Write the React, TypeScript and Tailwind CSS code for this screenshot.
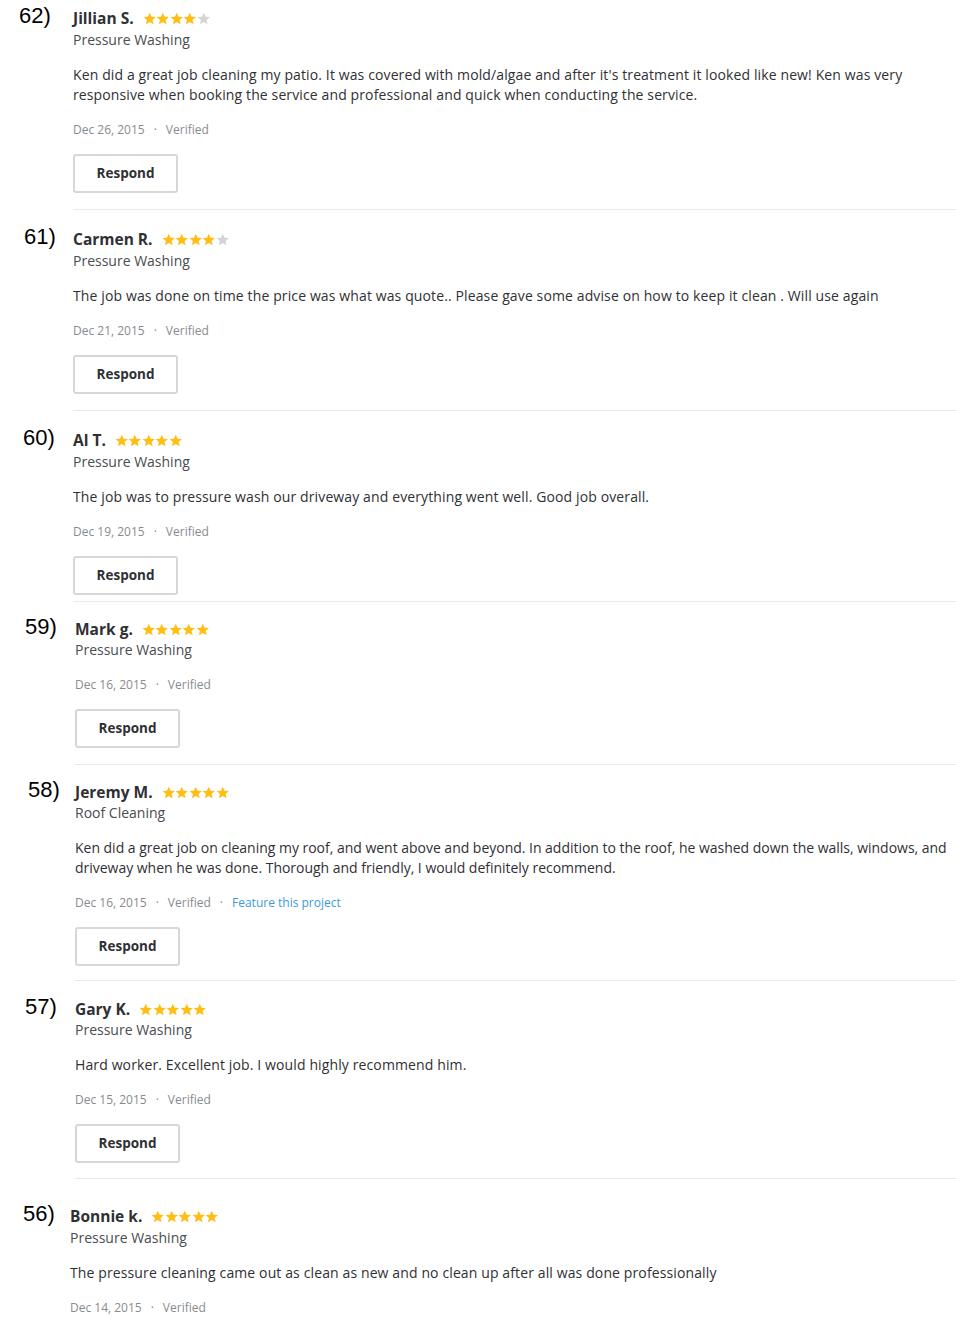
import React from "react"

type Review = {
    num: string
    numX: number
    x: number
    name: string
    stars: number
    category: string
    body?: string[]
    date: string
    feature?: boolean
    pt: number
    pb: number
    tight?: boolean
    narrow?: boolean
    respond: boolean
}

const reviews: Review[] = [
    {
        num: "62)",
        numX: 19,
        x: 73,
        name: "Jillian S.",
        stars: 4,
        category: "Pressure Washing",
        body: [
            "Ken did a great job cleaning my patio. It was covered with mold/algae and after it's treatment it looked like new! Ken was very",
            "responsive when booking the service and professional and quick when conducting the service.",
        ],
        date: "Dec 26, 2015",
        pt: 7,
        pb: 16,
        respond: true,
    },
    {
        num: "61)",
        numX: 24,
        x: 73,
        name: "Carmen R.",
        stars: 4,
        category: "Pressure Washing",
        body: [
            "The job was done on time the price was what was quote.. Please gave some advise on how to keep it clean . Will use again",
        ],
        date: "Dec 21, 2015",
        pt: 18,
        pb: 16,
        respond: true,
    },
    {
        num: "60)",
        numX: 23,
        x: 73,
        name: "Al T.",
        stars: 5,
        category: "Pressure Washing",
        body: ["The job was to pressure wash our driveway and everything went well. Good job overall."],
        date: "Dec 19, 2015",
        pt: 18,
        pb: 6,
        respond: true,
    },
    {
        num: "59)",
        numX: 25,
        x: 75,
        name: "Mark g.",
        stars: 5,
        category: "Pressure Washing",
        date: "Dec 16, 2015",
        pt: 16,
        pb: 16,
        tight: true,
        respond: true,
    },
    {
        num: "58)",
        numX: 28,
        x: 75,
        name: "Jeremy M.",
        stars: 5,
        category: "Roof Cleaning",
        body: [
            "Ken did a great job on cleaning my roof, and went above and beyond. In addition to the roof, he washed down the walls, windows, and",
            "driveway when he was done. Thorough and friendly, I would definitely recommend.",
        ],
        date: "Dec 16, 2015",
        feature: true,
        pt: 16,
        pb: 14,
        tight: true,
        narrow: true,
        respond: true,
    },
    {
        num: "57)",
        numX: 25,
        x: 75,
        name: "Gary K.",
        stars: 5,
        category: "Pressure Washing",
        body: ["Hard worker. Excellent job. I would highly recommend him."],
        date: "Dec 15, 2015",
        pt: 17,
        pb: 15,
        tight: true,
        respond: true,
    },
    {
        num: "56)",
        numX: 23,
        x: 70,
        name: "Bonnie k.",
        stars: 5,
        category: "Pressure Washing",
        body: ["The pressure cleaning came out as clean as new and no clean up after all was done professionally"],
        date: "Dec 14, 2015",
        pt: 26,
        pb: 0,
        respond: false,
    },
]

function Star({ filled }: { filled: boolean }) {
    return (
        <svg viewBox="0 0 24 24" className="w-[13.5px] h-[13.5px]">
            <path
                d="M12 1.2l3.2 7.3 7.8.6-6 5.1 1.9 7.7L12 17.8l-6.9 4.1 1.9-7.7-6-5.1 7.8-.6z"
                fill={filled ? "#febe14" : "#d3d4d5"}
            />
        </svg>
    )
}

function ReviewItem({ r }: { r: Review }) {
    return (
        <div className="flex" style={{ paddingTop: r.pt }}>
            <div className="shrink-0" style={{ width: r.x, paddingLeft: r.numX }}>
                <span className="block -mt-[2px] text-[22px] leading-[22px] text-black font-['Liberation_Sans',Arial,sans-serif]">
                    {r.num}
                </span>
            </div>
            <div className="flex-1" style={{ paddingBottom: r.pb }}>
                <div className="flex items-center h-[22px] pt-px">
                    <span className="text-[15.5px] font-bold text-[#2f3033]">{r.name}</span>
                    <span className="flex ml-[9px]">
                        {[0, 1, 2, 3, 4].map((i) => (
                            <Star key={i} filled={i < r.stars} />
                        ))}
                    </span>
                </div>
                <div
                    className={`${r.tight ? "-mt-px" : ""} h-[22px] leading-[22px] text-[14px] text-[#4a4d51]`}
                >
                    {r.category}
                </div>
                {r.body && (
                    <div
                        className={`mt-[14px] text-[14px] ${r.narrow ? "tracking-[-0.02px]" : "tracking-[0.12px]"} leading-[20px] text-[#2f3033]`}
                    >
                        {r.body.map((l, i) => (
                            <div key={i} className="whitespace-nowrap">
                                {l}
                            </div>
                        ))}
                    </div>
                )}
                <div
                    className={`${r.body ? "mt-[16px]" : "mt-[15px]"} h-[18px] flex items-center text-[12px] text-[#878b8f]`}
                >
                    <span>{r.date}</span>
                    <span className="mx-[9px]">·</span>
                    <span>Verified</span>
                    {r.feature && (
                        <>
                            <span className="mx-[9px]">·</span>
                            <span className="text-[#3b9cd9]">Feature this project</span>
                        </>
                    )}
                </div>
                {r.respond && (
                    <button className="block mt-[15px] w-[105px] h-[39px] border-2 border-[#d6d7d8] rounded-[3px] bg-white text-[13.5px] font-bold text-[#2f3033]">
                        Respond
                    </button>
                )}
            </div>
        </div>
    )
}

export default function App() {
    return (
        <div className="w-[956px] h-[1322px] bg-white overflow-hidden font-['Open_Sans','Noto_Sans',sans-serif]">
            {reviews.map((r, i) => (
                <div key={i}>
                    <ReviewItem r={r} />
                    {r.respond && <div className="h-px bg-[#e8e9ea]" style={{ marginLeft: r.x }} />}
                </div>
            ))}
        </div>
    )
}
